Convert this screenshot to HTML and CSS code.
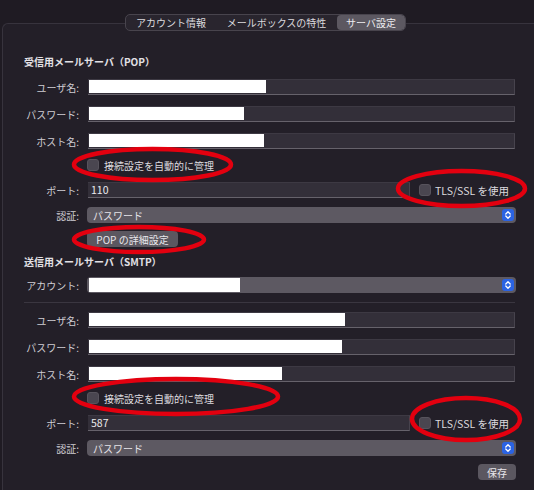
FILE: index.html
```html
<!DOCTYPE html>
<html lang="ja">
<head>
<meta charset="utf-8">
<link rel="stylesheet" href="styles.css">
</head>
<body>
<div class="tabs">
  <span class="tab t1">アカウント情報</span>
  <span class="tab t2">メールボックスの特性</span>
  <span class="tab t3 sel">サーバ設定</span>
</div>
<div class="panel">
  <div class="heading">受信用メールサーバ（POP）</div>

  <div class="row m10"><span class="lbl">ユーザ名:</span><div class="field"><div class="redact" style="width:177px"></div></div></div>
  <div class="row m11"><span class="lbl">パスワード:</span><div class="field"><div class="redact" style="width:155px"></div></div></div>
  <div class="row m11"><span class="lbl">ホスト名:</span><div class="field"><div class="redact" style="width:175px"></div></div></div>
  <div class="row m8"><span class="lbl"></span><div class="check"><span class="box"></span><span class="ctext">接続設定を自動的に管理</span></div></div>
  <div class="row m9"><span class="lbl">ポート:</span><div class="field port"><span class="val">110</span></div><div class="check tls"><span class="box"></span><span class="ctext">TLS/SSL を使用</span></div></div>
  <div class="row m9"><span class="lbl">認証:</span><div class="popup"><span class="ptext">パスワード</span><span class="stepper"><svg width="12" height="12" viewBox="0 0 12 12"><path d="M3.8 5 L6 2.8 L8.2 5 M3.8 7 L6 9.2 L8.2 7" fill="none" stroke="#fff" stroke-width="1.3" stroke-linecap="round" stroke-linejoin="round"/></svg></span></div></div>
  <div class="row m8"><span class="lbl"></span><span class="btn popbtn">POP の詳細設定</span></div>

  <div class="heading m8">送信用メールサーバ（SMTP）</div>
  <div class="row m8"><span class="lbl">アカウント:</span><div class="popup"><div class="redact acc" style="width:151px"></div><span class="stepper"><svg width="12" height="12" viewBox="0 0 12 12"><path d="M3.8 5 L6 2.8 L8.2 5 M3.8 7 L6 9.2 L8.2 7" fill="none" stroke="#fff" stroke-width="1.3" stroke-linecap="round" stroke-linejoin="round"/></svg></span></div></div>
  <div class="sep"></div>
  <div class="row m9"><span class="lbl">ユーザ名:</span><div class="field"><div class="redact" style="width:256px"></div></div></div>
  <div class="row m11"><span class="lbl">パスワード:</span><div class="field"><div class="redact" style="width:253px"></div></div></div>
  <div class="row m11"><span class="lbl">ホスト名:</span><div class="field"><div class="redact" style="width:193px"></div></div></div>
  <div class="row m8"><span class="lbl"></span><div class="check"><span class="box"></span><span class="ctext">接続設定を自動的に管理</span></div></div>
  <div class="row m9"><span class="lbl">ポート:</span><div class="field port"><span class="val">587</span></div><div class="check tls"><span class="box"></span><span class="ctext">TLS/SSL を使用</span></div></div>
  <div class="row m9"><span class="lbl">認証:</span><div class="popup"><span class="ptext">パスワード</span><span class="stepper"><svg width="12" height="12" viewBox="0 0 12 12"><path d="M3.8 5 L6 2.8 L8.2 5 M3.8 7 L6 9.2 L8.2 7" fill="none" stroke="#fff" stroke-width="1.3" stroke-linecap="round" stroke-linejoin="round"/></svg></span></div></div>
  <div class="row m8 end"><span class="btn save">保存</span></div>
</div>

<svg class="marks" width="534" height="490" viewBox="0 0 534 490">
  <g fill="none" stroke="#e3000f" stroke-width="4.5">
    <ellipse cx="152.5" cy="164.5" rx="78.5" ry="15.5"/>
    <ellipse cx="461.5" cy="188.5" rx="63.5" ry="17.5"/>
    <ellipse cx="139" cy="239.5" rx="65" ry="12.5"/>
    <ellipse cx="176" cy="396.5" rx="102" ry="17.5"/>
    <ellipse cx="466" cy="419" rx="54" ry="21"/>
  </g>
</svg>
</body>
</html>
```

FILE: styles.css
```css
html, body {
  margin: 0;
  padding: 0;
}
body {
  width: 534px;
  height: 490px;
  overflow: hidden;
  background: #1f1b23;
  font-family: "Noto Sans CJK JP", "Noto Sans", sans-serif;
  font-size: 10px;
  color: #d6d4d9;
  padding-top: 14px;
  box-sizing: border-box;
  position: relative;
  display: flex;
  flex-direction: column;
}
.tabs {
  position: relative;
  z-index: 2;
  margin-left: 125px;
  display: flex;
  width: max-content;
  height: 17px;
  flex: 0 0 17px;
  box-sizing: border-box;
  border: 1px solid #48444d;
  border-radius: 5px;
  background: #29252e;
  overflow: hidden;
}
.tab {
  display: flex;
  align-items: center;
  justify-content: center;
  height: 15px;
  line-height: 15px;
  color: #dcdade;
  font-size: 10px;
}
.t1 { width: 90px; }
.t2 { width: 121px; }
.t3 { width: 68px; }
.tab.sel {
  background: #5c5861;
  border-radius: 4px;
  color: #eeedf0;
}
.panel {
  margin-top: -8px;
  margin-left: 2px;
  flex: 1 1 auto;
  min-height: 0;
  box-sizing: border-box;
  border-top: 1px solid #37333d;
  border-left: 1px solid #37333d;
  border-top-left-radius: 6px;
  background: #231f28;
  padding-top: 31px;
  display: flex;
  flex-direction: column;
  overflow: hidden;
}
.heading {
  padding-left: 21px;
  height: 14px;
  line-height: 14px;
  font-weight: bold;
  color: #e2e0e5;
  font-size: 10px;
}
.row {
  display: flex;
  align-items: center;
  height: 16px;
  flex: 0 0 16px;
  width: 513px;
}
.row.end { justify-content: flex-end; }
.m8 { margin-top: 8px; }
.m9 { margin-top: 9px; }
.m10 { margin-top: 10px; }
.m11 { margin-top: 11px; }
.lbl {
  flex: 0 0 76px;
  text-align: right;
  color: #cfcdd3;
  white-space: nowrap;
}
.field {
  margin-left: 9px;
  width: 427px;
  height: 16px;
  box-sizing: border-box;
  background: #332f39;
  border-top: 1px solid #3d3943;
  border-right: 1px solid #47434d;
  border-bottom: 1px solid #66626b;
  display: flex;
  align-items: flex-start;
}
.field.port { width: 322px; }
.redact {
  height: 13px;
  background: #ffffff;
  margin-left: 1px;
}
.val {
  margin-left: 3px;
  line-height: 14px;
  font-size: 10.5px;
  color: #ecebee;
}
.check {
  margin-left: 8px;
  display: flex;
  align-items: center;
}
.check.tls { margin-left: 9px; }
.box {
  width: 12px;
  height: 12px;
  box-sizing: border-box;
  border-radius: 3px;
  background: #4a4650;
  border: 1px solid #57535c;
}
.ctext {
  margin-left: 5px;
  color: #dcdadf;
  white-space: nowrap;
}
.tls .ctext { margin-left: 4px; font-size: 10.5px; }
.popup {
  margin-left: 8px;
  width: 429px;
  height: 16px;
  box-sizing: border-box;
  background: #5d5962;
  border-radius: 4px;
  display: flex;
  align-items: center;
  justify-content: space-between;
  padding-right: 2px;
}
.ptext {
  margin-left: 6px;
  color: #e6e4e9;
}
.redact.acc {
  height: 14px;
  margin-left: 2px;
}
.stepper {
  width: 12px;
  height: 12px;
  border-radius: 3px;
  background: #2b63e3;
  display: flex;
}
.btn {
  height: 16px;
  box-sizing: border-box;
  border-radius: 4px;
  background: #5b5760;
  color: #e9e7ec;
  display: flex;
  align-items: center;
  justify-content: center;
  white-space: nowrap;
}
.popbtn {
  margin-left: 8px;
  width: 91px;
}
.save {
  width: 38px;
}
.sep {
  margin-top: 9px;
  margin-left: 21px;
  width: 491px;
  height: 1px;
  flex: 0 0 1px;
  background: #3a3640;
}
.marks {
  position: absolute;
  top: 0;
  left: 0;
  pointer-events: none;
  z-index: 5;
}
```
